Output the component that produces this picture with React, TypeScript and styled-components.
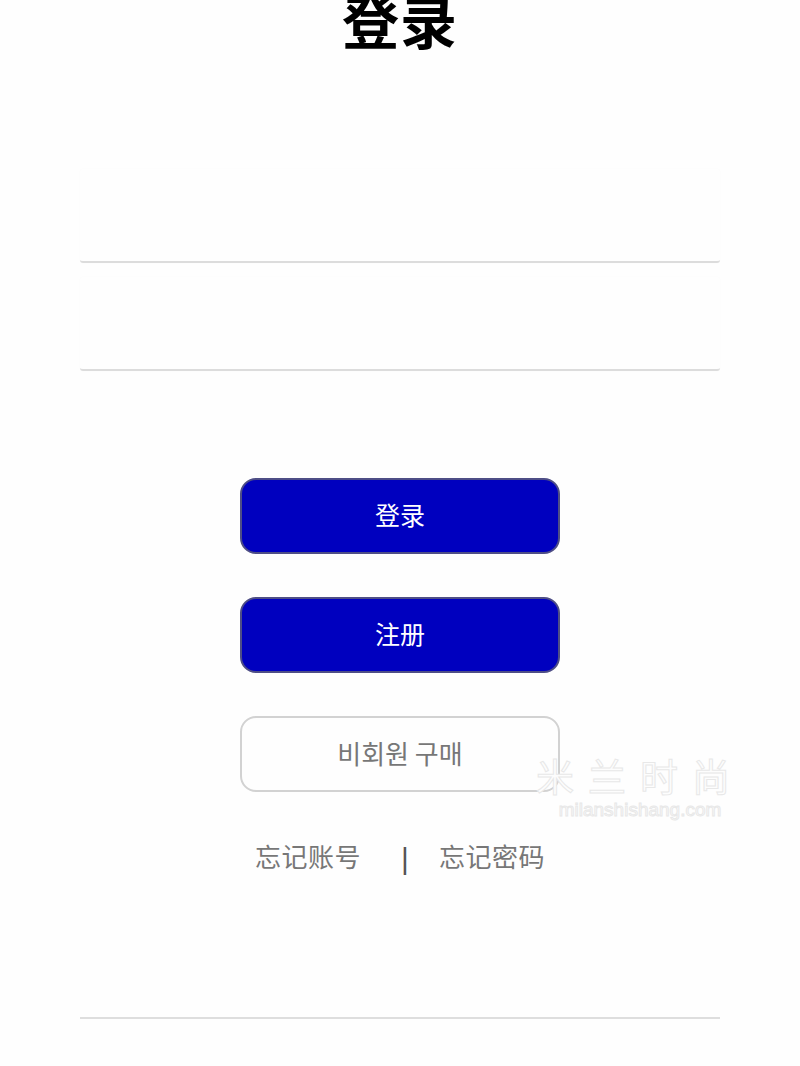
import React from 'react';
import styled, { createGlobalStyle } from 'styled-components';

const GlobalStyle = createGlobalStyle`
  html, body {
    margin: 0;
    padding: 0;
    background: #fefefe;
  }
  body {
    font-family: "Noto Sans CJK SC", "Noto Sans", sans-serif;
    overflow: hidden;
  }
`

const Page = styled.div`
  position: relative;
  width: 800px;
  height: 1066px;
  display: flex;
  flex-direction: column;
  align-items: center;
`

const Title = styled.h1`
  margin: -9px 0 0;
  font-size: 57px;
  line-height: 1;
  font-weight: 700;
  color: #000;
  letter-spacing: 1px;
`

const Form = styled.div`
  width: 640px;
  margin-top: 121px;
  display: flex;
  flex-direction: column;
  gap: 14px;
`

const Field = styled.input`
  height: 94px;
  width: 100%;
  box-sizing: border-box;
  border: none;
  border-bottom: 2px solid #dcdcdc;
  border-radius: 3px;
  background: #fefefe;
  box-shadow: 0 0 2px rgba(0, 0, 0, 0.02);
  outline: none;
  padding: 0 16px;
  font-size: 24px;
  font-family: inherit;
`

const Actions = styled.div`
  margin-top: 107px;
  display: flex;
  flex-direction: column;
  gap: 43px;
`

const Button = styled.button<{ $ghost?: boolean }>`
  width: 320px;
  height: 76px;
  box-sizing: border-box;
  border-radius: 16px;
  border: 2px solid ${p => (p.$ghost ? '#d2d2d2' : '#4e4e86')};
  background: ${p => (p.$ghost ? '#fefefe' : '#0000bf')};
  color: ${p => (p.$ghost ? '#777' : '#fff')};
  font-family: ${p => (p.$ghost ? '"Noto Sans CJK KR"' : '"Noto Sans CJK SC"')}, sans-serif;
  font-size: ${p => (p.$ghost ? '26px' : '25px')};
  display: flex;
  align-items: center;
  justify-content: center;
  padding: 0 0 4px;
`

const Links = styled.div`
  margin-top: 46px;
  display: flex;
  align-items: center;
  color: #777;
  font-size: 26px;
`

const LinkText = styled.span`
  line-height: 1.3;
  letter-spacing: 0.5px;
`

const Separator = styled.span`
  margin: 6px 30px 0 40px;
  font-family: "Liberation Sans", sans-serif;
  font-size: 30px;
  color: #555;
  line-height: 1;
`

const BottomLine = styled.div`
  margin-top: auto;
  margin-bottom: 47px;
  width: 640px;
  height: 2px;
  background: #dedede;
`

const Watermark = styled.div`
  position: absolute;
  left: 536px;
  top: 756px;
  display: flex;
  flex-direction: column;
  align-items: center;
  color: #fdfdfd;
  -webkit-text-stroke: 1px #e8e8e8;
  pointer-events: none;
`

const WatermarkName = styled.span`
  font-size: 38px;
  letter-spacing: 14px;
  line-height: 1;
`

const WatermarkUrl = styled.span`
  font-family: "Liberation Sans", sans-serif;
  font-size: 19px;
  line-height: 1;
  margin-top: 6px;
`

export default function App() {
  return (
    <Page>
      <GlobalStyle />
      <Title>登录</Title>
      <Form>
        <Field type="text" />
        <Field type="password" />
      </Form>
      <Actions>
        <Button>登录</Button>
        <Button>注册</Button>
        <Button $ghost>비회원 구매</Button>
      </Actions>
      <Links>
        <LinkText>忘记账号</LinkText>
        <Separator>|</Separator>
        <LinkText>忘记密码</LinkText>
      </Links>
      <BottomLine />
      <Watermark>
        <WatermarkName>米兰时尚</WatermarkName>
        <WatermarkUrl>milanshishang.com</WatermarkUrl>
      </Watermark>
    </Page>
  );
}
